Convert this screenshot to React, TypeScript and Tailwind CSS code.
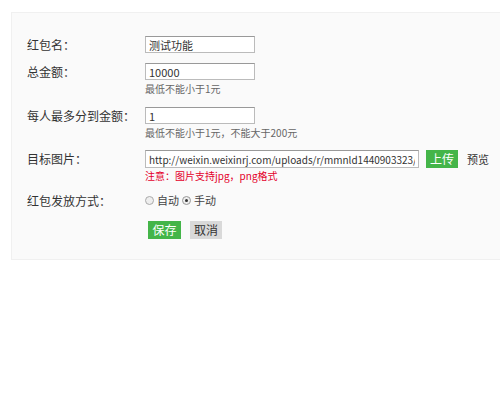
import React from "react";

const font = { fontFamily: '"Noto Sans CJK SC", "Noto Sans", sans-serif' };

function Label({ children }: { children: React.ReactNode }) {
  return (
    <div className="w-[118px] shrink-0 h-[17px] flex items-center text-[12px] text-[#333]">
      {children}
    </div>
  );
}

function Input({ value, w }: { value: string; w: string }) {
  return (
    <input
      readOnly
      value={value}
      className={`${w} h-[17px] border border-[#bbb] border-t-[#999] bg-white px-[3px] text-[11px] text-[#333] outline-none`}
      style={font}
    />
  );
}

export default function App() {
  return (
    <div className="w-[500px] h-[410px] bg-white pt-[12px] pl-[11px]" style={font}>
      <div className="h-[248px] bg-[#fafafa] border border-[#f0f0f0] border-r-0 pl-[15px] pt-[23px]">
        <div className="flex">
          <Label>红包名：</Label>
          <Input value="测试功能" w="w-[110px]" />
        </div>
        <div className="flex mt-[10px]">
          <Label>总金额：</Label>
          <div className="flex flex-col">
            <Input value="10000" w="w-[110px]" />
            <div className="text-[10px] leading-[13px] mt-[2px] text-[#666]">最低不能小于1元</div>
          </div>
        </div>
        <div className="flex mt-[12px]">
          <Label>每人最多分到金额：</Label>
          <div className="flex flex-col">
            <Input value="1" w="w-[110px]" />
            <div className="text-[10px] leading-[13px] mt-[2px] text-[#666]">最低不能小于1元，不能大于200元</div>
          </div>
        </div>
        <div className="flex mt-[11px]">
          <div className="w-[118px] shrink-0 h-[18px] flex items-center text-[12px] text-[#333]">目标图片：</div>
          <div className="flex flex-col">
            <div className="flex items-center">
              <input
                readOnly
                value="http://weixin.weixinrj.com/uploads/r/mmnld1440903323/9/d/6/a.jpg"
                className="w-[274px] h-[18px] border border-[#bbb] border-t-[#999] bg-white px-[3px] text-[10px] text-[#333] outline-none"
                style={font}
              />
              <div className="ml-[7px] w-[32px] h-[18px] bg-[#44b549] text-white text-[12px] flex items-center justify-center">上传</div>
              <div className="ml-[9px] text-[11px] text-[#333]">预览</div>
            </div>
            <div className="text-[10px] leading-[13px] mt-[1px] text-[#e4002b]">注意：图片支持jpg，png格式</div>
          </div>
        </div>
        <div className="flex mt-[10px] items-center">
          <Label>红包发放方式：</Label>
          <div className="flex items-center text-[11px] text-[#444]">
            <span className="w-[9px] h-[9px] rounded-full border border-[#aaa] bg-[#eee]" />
            <span className="ml-[3px]">自动</span>
            <span className="ml-[3px] w-[9px] h-[9px] rounded-full border border-[#999] bg-[#eee] flex items-center justify-center">
              <span className="w-[3px] h-[3px] rounded-full bg-[#333]" />
            </span>
            <span className="ml-[3px]">手动</span>
          </div>
        </div>
        <div className="flex mt-[12px] pl-[121px]">
          <div className="w-[33px] h-[18px] bg-[#44b549] text-white text-[12px] flex items-center justify-center">保存</div>
          <div className="ml-[9px] w-[32px] h-[18px] bg-[#d9d9d9] text-[#333] text-[12px] flex items-center justify-center">取消</div>
        </div>
      </div>
    </div>
  );
}
